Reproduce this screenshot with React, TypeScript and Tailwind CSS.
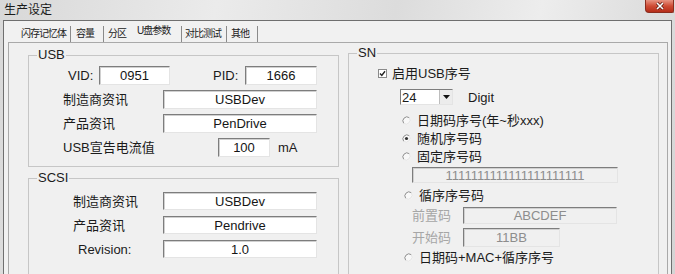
import React from "react";

function Field({ className, text, dim, left }: { className: string; text: string; dim?: boolean; left?: boolean }) {
  return (
    <div
      className={
        "flex items-center border border-[#7d7d7d] border-b-[#e4e4e4] border-r-[#e4e4e4] shadow-[inset_1px_1px_0_#d0d0d0] text-[13px] leading-none " +
        (left ? "justify-start pl-[30px] " : "justify-center ") +
        (dim ? "bg-[#f0f0f0] text-[#8d8d8d] " : "bg-white text-[#151515] ") +
        className
      }
    >
      {text}
    </div>
  );
}

function Radio({ checked }: { checked?: boolean }) {
  return (
    <svg width="9" height="9" viewBox="0 0 9 9" className="shrink-0">
      <circle cx="4.5" cy="4.5" r="4" fill="#f8f8f8" />
      <path d="M7.3 1.7 A4 4 0 0 0 1.7 7.3" stroke="#8c8c8c" fill="none" />
      <path d="M7.3 1.7 A4 4 0 0 1 1.7 7.3" stroke="#e4e4e4" fill="none" />
      {checked && <circle cx="4.5" cy="4.5" r="1.6" fill="#333" />}
    </svg>
  );
}

function Group({ title, className, children }: { title: string; className: string; children: React.ReactNode }) {
  return (
    <fieldset className={"border border-[#c6c6c6] " + className}>
      <legend className="ml-[8px] px-[1px] text-[13px] leading-[14px] text-[#1b1b1b]">{title}</legend>
      {children}
    </fieldset>
  );
}

export default function App() {
  return (
    <div className="w-[675px] h-[274px] overflow-hidden flex flex-col bg-[linear-gradient(100deg,#d8d8d8,#ebebeb_30%,#dcdcdc_55%,#ededed_75%,#d4d4d4)] font-['Liberation_Sans','Noto_Sans_CJK_SC',sans-serif] text-[#1b1b1b]">
      <div className="h-[20px] shrink-0 flex items-start justify-between">
        <div className="pl-[4px] pt-[3px] text-[12px] leading-[14px]">生产设定</div>
        <div className="w-[29px] h-[13px] mr-[1px] rounded-bl-[4px] rounded-br-[2px] border border-t-0 border-[#8a2c1e] bg-[linear-gradient(#e79483,#cf4c35_50%,#b52d1a)] flex items-center justify-center">
          <svg width="10" height="8" viewBox="0 0 10 8">
            <path d="M2 1 L8 7 M8 1 L2 7" stroke="#5a1a10" strokeWidth="3" />
            <path d="M2 1 L8 7 M8 1 L2 7" stroke="#ffffff" strokeWidth="1.6" />
          </svg>
        </div>
      </div>
      <div className="flex-1 mx-[3px] border-t border-l border-r border-[#6f6f6f] bg-[#f1f1f1] flex flex-col">
        <div className="h-[21px] shrink-0 flex pl-[17px] pt-[5px] text-[10px] tracking-[-1px] leading-none text-[#222]">
          <span className="w-[50px] border-r border-[#8a8a8a] flex items-center">闪存记忆体</span>
          <span className="w-[33px] pl-[5px] border-r border-[#8a8a8a] flex items-center">容量</span>
          <span className="w-[33px] pl-[4px] flex items-center">分区</span>
          <span className="w-[45px] border-r border-[#8a8a8a] flex items-center pb-[6px]">U盘参数</span>
          <span className="w-[45px] pl-[3px] border-r border-[#8a8a8a] flex items-center">对比测试</span>
          <span className="w-[31px] pl-[4px] border-r border-[#8a8a8a] flex items-center">其他</span>
        </div>
        <div className="flex-1 ml-[4px] mr-[3px] border-t border-l border-r border-[#a9a9a9] bg-[#f0f0f0] flex pl-[19px] gap-[9px] text-[13px] leading-none">
          <div className="w-[311px] shrink-0 flex flex-col pt-[5px]">
            <Group title="USB" className="w-[311px]">
              <div className="pt-[4px] pb-[9px] flex flex-col gap-[5px]">
                <div className="flex items-center h-[19px] pl-[39px]">
                  <span className="w-[31px]">VID:</span>
                  <Field className="w-[71px] h-[19px]" text="0951" />
                  <span className="ml-[43px] w-[32px]">PID:</span>
                  <Field className="w-[72px] h-[19px]" text="1666" />
                </div>
                <div className="flex items-center h-[19px] pl-[34px]">
                  <span className="w-[100px]">制造商资讯</span>
                  <Field className="w-[154px] h-[19px]" text="USBDev" />
                </div>
                <div className="flex items-center h-[19px] pl-[34px]">
                  <span className="w-[100px]">产品资讯</span>
                  <Field className="w-[154px] h-[19px]" text="PenDrive" />
                </div>
                <div className="flex items-center h-[19px] pl-[34px]">
                  <span className="w-[155px]">USB宣告电流值</span>
                  <Field className="w-[52px] h-[19px]" text="100" />
                  <span className="ml-[8px]">mA</span>
                </div>
              </div>
            </Group>
            <Group title="SCSI" className="w-[311px] mt-[4px]">
              <div className="pt-[7px] pb-[20px] flex flex-col gap-[6px]">
                <div className="flex items-center h-[18px] pl-[44px]">
                  <span className="w-[90px]">制造商资讯</span>
                  <Field className="w-[154px] h-[18px]" text="USBDev" />
                </div>
                <div className="flex items-center h-[18px] pl-[44px]">
                  <span className="w-[90px]">产品资讯</span>
                  <Field className="w-[154px] h-[18px]" text="Pendrive" />
                </div>
                <div className="flex items-center h-[18px] pl-[49px]">
                  <span className="w-[85px]">Revision:</span>
                  <Field className="w-[154px] h-[18px]" text="1.0" />
                </div>
              </div>
            </Group>
          </div>
          <div className="w-[311px] shrink-0 flex flex-col pt-[3px]">
            <Group title="SN" className="w-[311px]">
              <div className="flex flex-col pb-[20px]">
                <div className="flex items-center h-[14px] mt-[6px] pl-[29px] gap-[5px]">
                  <svg width="9" height="9" viewBox="0 0 9 9" className="shrink-0">
                    <rect x="0.5" y="0.5" width="8" height="8" fill="#fff" stroke="#8a8a8a" />
                    <path d="M2 4.5 L3.8 6.4 L7 2.3" stroke="#222" strokeWidth="1.4" fill="none" />
                  </svg>
                  <span>启用USB序号</span>
                </div>
                <div className="flex items-center h-[16px] mt-[9px] pl-[51px]">
                  <div className="flex w-[53px] h-[16px] bg-white border border-[#7d7d7d] border-b-[#e4e4e4] border-r-[#e4e4e4]">
                    <span className="flex-1 pl-[1px] flex items-center">24</span>
                    <span className="w-[13px] bg-[#ececec] border-l border-[#bdbdbd] flex items-center justify-center">
                      <svg width="7" height="4" viewBox="0 0 7 4">
                        <path d="M0 0 H7 L3.5 4 Z" fill="#111" />
                      </svg>
                    </span>
                  </div>
                  <span className="ml-[15px]">Digit</span>
                </div>
                <div className="flex items-center h-[16px] mt-[7px] pl-[53px] gap-[6px]">
                  <Radio />
                  <span>日期码序号(年~秒xxx)</span>
                </div>
                <div className="flex items-center h-[16px] mt-[2px] pl-[53px] gap-[6px]">
                  <Radio checked />
                  <span>随机序号码</span>
                </div>
                <div className="flex items-center h-[16px] mt-[2px] pl-[53px] gap-[6px]">
                  <Radio />
                  <span>固定序号码</span>
                </div>
                <div className="flex mt-[3px] pl-[63px]">
                  <Field className="w-[206px] h-[16px] text-[12px]" text="1111111111111111111111" dim />
                </div>
                <div className="flex items-center h-[16px] mt-[4px] pl-[55px] gap-[6px]">
                  <Radio />
                  <span>循序序号码</span>
                </div>
                <div className="flex items-center h-[17px] mt-[4px] pl-[63px]">
                  <span className="w-[51px] text-[#a6a6a6]">前置码</span>
                  <Field className="w-[154px] h-[17px]" text="ABCDEF" dim />
                </div>
                <div className="flex items-center h-[19px] mt-[4px] pl-[63px]">
                  <span className="w-[51px] text-[#a6a6a6]">开始码</span>
                  <Field className="w-[97px] h-[19px]" text="11BB" dim />
                </div>
                <div className="flex items-center h-[16px] mt-[2px] pl-[55px] gap-[6px]">
                  <Radio />
                  <span>日期码+MAC+循序序号</span>
                </div>
              </div>
            </Group>
          </div>
        </div>
      </div>
    </div>
  );
}
